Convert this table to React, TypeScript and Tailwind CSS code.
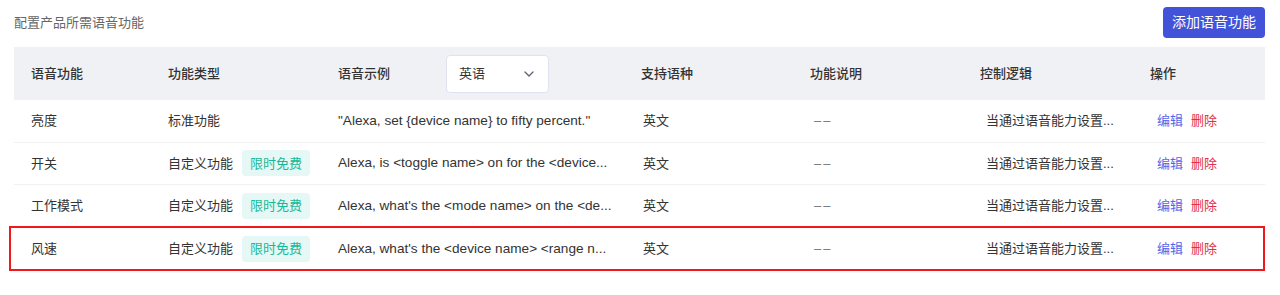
import React from "react";

const cols = ["w-[137px]", "w-[170px]", "w-[303px]", "w-[169px]", "w-[170px]", "w-[170px]", "w-[132px]"];

const rows = [
  { name: "亮度", type: "标准功能", badge: false, ex: "\"Alexa, set {device name} to fifty percent.\"" },
  { name: "开关", type: "自定义功能", badge: true, ex: "Alexa, is <toggle name> on for the <device..." },
  { name: "工作模式", type: "自定义功能", badge: true, ex: "Alexa, what's the <mode name> on the <de..." },
  { name: "风速", type: "自定义功能", badge: true, ex: "Alexa, what's the <device name> <range n..." },
];

export default function App() {
  return (
    <div
      className="w-[1280px] h-[295px] bg-white text-[13px] text-[#333]"
      style={{ fontFamily: '"Liberation Sans", "Noto Sans CJK SC", sans-serif' }}
    >
      <div className="flex items-center justify-between pl-[14px] pr-[15px] pt-[7px] h-[47px] pb-[9px]">
        <div className="text-[#666] text-[13px]">配置产品所需语音功能</div>
        <button className="h-[31px] w-[102px] rounded-[4px] bg-[#4353d9] text-white text-[14px]">
          添加语音功能
        </button>
      </div>
      <div className="relative mx-[14px] w-[1251px]">
        <div className="flex items-center h-[53px] bg-[#f0f1f5] font-medium text-[#333]">
          <div className={`${cols[0]} pl-[17px]`}>语音功能</div>
          <div className={`${cols[1]} pl-[17px]`}>功能类型</div>
          <div className={`${cols[2]} pl-[17px] flex items-center`}>
            <span>语音示例</span>
            <div className="ml-[56px] w-[103px] h-[38px] bg-white border border-[#dfe3f0] rounded-[4px] flex items-center justify-between pl-[12px] pr-[14px] font-normal">
              <span>英语</span>
              <svg width="10" height="6" viewBox="0 0 10 6" fill="none">
                <path d="M1 1l4 4 4-4" stroke="#5a6275" strokeWidth="1.3" strokeLinecap="round" strokeLinejoin="round" />
              </svg>
            </div>
          </div>
          <div className={`${cols[3]} pl-[17px]`}>支持语种</div>
          <div className={`${cols[4]} pl-[17px]`}>功能说明</div>
          <div className={`${cols[5]} pl-[17px]`}>控制逻辑</div>
          <div className={`${cols[6]} pl-[17px]`}>操作</div>
        </div>
        {rows.map((r, i) => (
          <div
            key={i}
            className={`flex items-center h-[42.5px] ${i < rows.length - 1 ? "border-b border-[#f0f1f5]" : ""}`}
          >
            <div className={`${cols[0]} pl-[17px]`}>{r.name}</div>
            <div className={`${cols[1]} pl-[17px] flex items-center`}>
              <span>{r.type}</span>
              {r.badge && (
                <span className="ml-[9px] w-[68px] h-[26px] rounded-[4px] bg-[#e5f8f5] text-[#16b99a] flex items-center justify-center text-[13px]">
                  限时免费
                </span>
              )}
            </div>
            <div className={`${cols[2]} pl-[17px] pr-[10px] whitespace-nowrap overflow-hidden text-[13.6px]`}>{r.ex}</div>
            <div className={`${cols[3]} pl-[19px]`}>英文</div>
            <div className={`${cols[4]} pl-[21px] text-[#777] tracking-[2px]`}>––</div>
            <div className={`${cols[5]} pl-[23px]`}>当通过语音能力设置...</div>
            <div className={`${cols[6]} pl-[24px] flex gap-[8px]`}>
              <span className="text-[#5666e8]">编辑</span>
              <span className="text-[#e0304e]">删除</span>
            </div>
          </div>
        ))}
        <div className="absolute left-[-5px] top-[179px] w-[1256px] h-[45px] border-2 border-[#f01818] pointer-events-none" />
      </div>
    </div>
  );
}
